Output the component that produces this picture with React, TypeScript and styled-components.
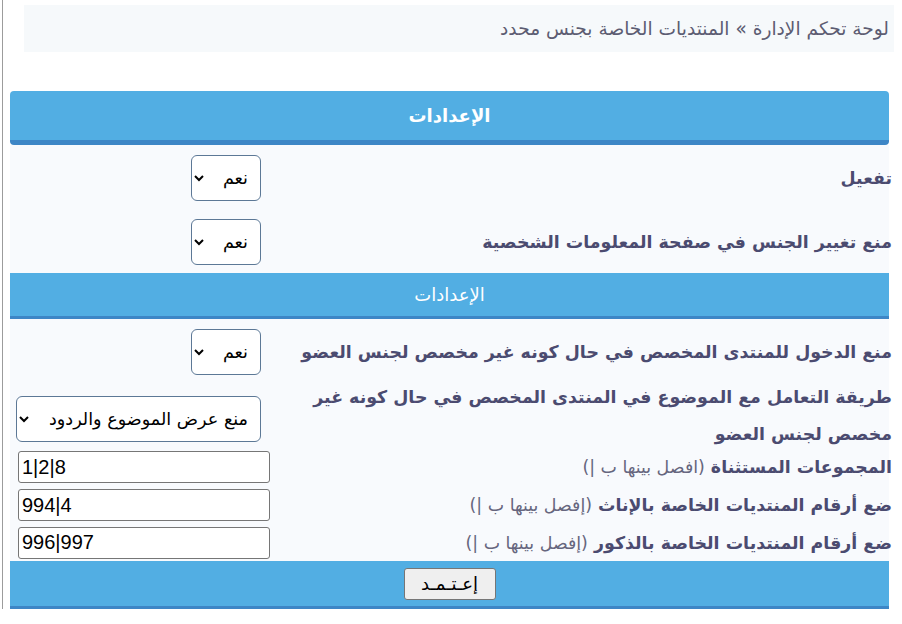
import React from "react";
import styled, { createGlobalStyle } from "styled-components";

const GlobalStyle = createGlobalStyle`
  html, body { margin: 0; padding: 0; background: #ffffff; min-height: 624px; }
  body { font-family: "DejaVu Sans", "Noto Sans", sans-serif; }
`;

// ─── Layout ────────────────────────────
const Page = styled.div`
  direction: rtl;
  width: 899px;
  margin-left: 2px;
  border-left: 1px solid #9c9c9c;
  box-sizing: border-box;
  padding-top: 5px;
`;

const Breadcrumb = styled.div`
  height: 47px;
  line-height: 47px;
  margin: 0 7px 0 21px;
  padding-right: 5px;
  background: #f6f9fb;
  color: #5c5c72;
  font-size: 18.6px;
  white-space: nowrap;
`;

const Panel = styled.div`
  margin: 39px 12px 0 7px;
`;

const TitleBar = styled.div`
  height: 49px;
  line-height: 49px;
  background: #52aee3;
  border-bottom: 5px solid #3d86c6;
  border-radius: 4px;
  color: #ffffff;
  font-size: 18px;
  font-weight: bold;
  text-align: center;
`;

const SubBar = styled.div`
  height: 43px;
  line-height: 43px;
  background: #52aee3;
  border-bottom: 3px solid #3d86c6;
  color: #ffffff;
  font-size: 18px;
  text-align: center;
`;

const Row = styled.div<{ $h: number }>`
  display: grid;
  grid-template-columns: 1fr 280px;
  align-items: center;
  height: ${(p) => p.$h}px;
  background: #f8fafd;
`;

const Label = styled.div<{ $tall?: boolean }>`
  margin-right: -3px;
  margin-top: ${(p) => (p.$tall ? "-5px" : "0")};
  padding-left: 8px;
  color: #4b4b70;
  font-size: 17.4px;
  font-weight: bold;
  white-space: ${(p) => (p.$tall ? "normal" : "nowrap")};
  line-height: ${(p) => (p.$tall ? "37px" : "26px")};
`;

const Hint = styled.span`
  font-weight: normal;
  color: #66667e;
`;

const Field = styled.div`
  display: flex;
  justify-content: flex-start;
`;

const Select = styled.select<{ $w: number }>`
  width: ${(p) => p.$w}px;
  height: 46px;
  margin-right: 29px;
  direction: rtl;
  border: 1px solid #5c7896;
  border-radius: 6px;
  background: #ffffff;
  color: #000000;
  font-family: "DejaVu Sans", sans-serif;
  font-size: 17.6px;
  padding: 0 8px;
`;

const TextInput = styled.input`
  width: 252px;
  height: 32px;
  margin-right: 20px;
  box-sizing: border-box;
  direction: ltr;
  text-align: left;
  border: 1px solid #767676;
  border-radius: 3px;
  padding: 0 3px;
  background: #ffffff;
  color: #000000;
  font-family: "Liberation Sans", sans-serif;
  font-size: 20px;
`;

const Footer = styled.div`
  height: 45px;
  background: #52aee3;
  border-bottom: 3px solid #3d86c6;
  display: flex;
  align-items: center;
  justify-content: center;
`;

const SubmitButton = styled.button`
  width: 92px;
  height: 32px;
  background: #efefef;
  border: 1px solid #767676;
  border-radius: 3px;
  color: #000000;
  font-family: "DejaVu Sans", sans-serif;
  font-size: 18px;
  padding: 0;
`;

// ─── Component ────────────────────────────
export default function App() {
  return (
    <>
      <GlobalStyle />
      <Page>
        <Breadcrumb>لوحة تحكم الإدارة » المنتديات الخاصة بجنس محدد</Breadcrumb>

        <Panel>
          <TitleBar>الإعدادات</TitleBar>

          <Row $h={65}>
            <Label>تفعيل</Label>
            <Field>
              <Select $w={70} defaultValue="1">
                <option value="1">نعم</option>
                <option value="0">لا</option>
              </Select>
            </Field>
          </Row>

          <Row $h={63}>
            <Label>منع تغيير الجنس في صفحة المعلومات الشخصية</Label>
            <Field>
              <Select $w={70} defaultValue="1">
                <option value="1">نعم</option>
                <option value="0">لا</option>
              </Select>
            </Field>
          </Row>

          <SubBar>الإعدادات</SubBar>

          <Row $h={65}>
            <Label>منع الدخول للمنتدى المخصص في حال كونه غير مخصص لجنس العضو</Label>
            <Field>
              <Select $w={70} defaultValue="1">
                <option value="1">نعم</option>
                <option value="0">لا</option>
              </Select>
            </Field>
          </Row>

          <Row $h={64}>
            <Label $tall>طريقة التعامل مع الموضوع في المنتدى المخصص في حال كونه غير مخصص لجنس العضو</Label>
            <Field>
              <Select $w={245} defaultValue="hide">
                <option value="hide">منع عرض الموضوع والردود</option>
                <option value="show">عرض الموضوع</option>
              </Select>
            </Field>
          </Row>

          <Row $h={38}>
            <Label>
              المجموعات المستثناة <Hint>(افصل بينها ب |)</Hint>
            </Label>
            <Field>
              <TextInput defaultValue="1|2|8" />
            </Field>
          </Row>

          <Row $h={38}>
            <Label>
              ضع أرقام المنتديات الخاصة بالإناث <Hint>(إفصل بينها ب |)</Hint>
            </Label>
            <Field>
              <TextInput defaultValue="994|4" />
            </Field>
          </Row>

          <Row $h={37}>
            <Label>
              ضع أرقام المنتديات الخاصة بالذكور <Hint>(إفصل بينها ب |)</Hint>
            </Label>
            <Field>
              <TextInput defaultValue="996|997" />
            </Field>
          </Row>

          <Footer>
            <SubmitButton type="button">إعـتـمـد</SubmitButton>
          </Footer>
        </Panel>
      </Page>
    </>
  );
}
